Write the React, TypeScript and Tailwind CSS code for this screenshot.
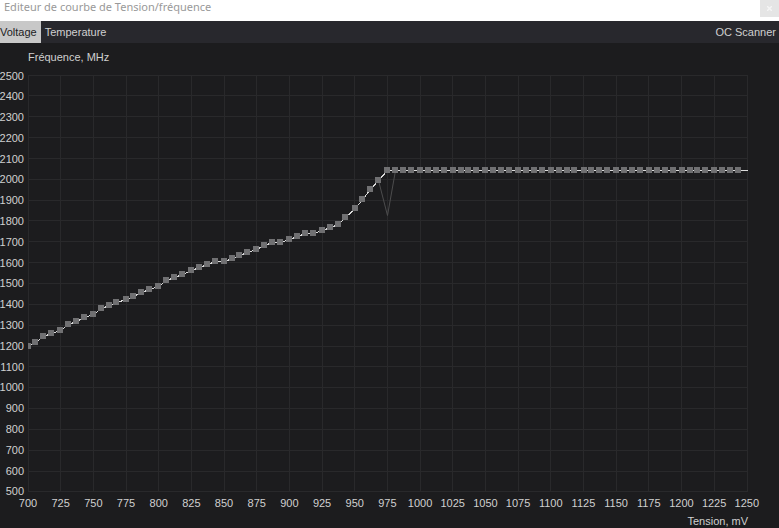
import { useState } from "react";

const TABS = ["Voltage", "Temperature"];

const FREQUENCIES = Array.from({ length: 21 }, (_, i) => 2500 - i * 100);
const VOLTAGES = Array.from({ length: 23 }, (_, i) => 700 + i * 25);

// plot area is 720 x 417, origin at 700 mV / 2500 MHz
const PLOT_W = 720;
const PLOT_H = 417;
const GRID_ROWS = [0, 20, 41, 62, 83, 104, 125, 145, 166, 187, 208, 229, 250, 271, 291, 312, 333, 354, 375, 396, 416];
const GRID_COLS = VOLTAGES.map((_, i) => Math.floor((i * 719) / 22));

// one point every 6.25 mV, heights in plot units
const RAMP = [
  271, 267, 261, 258, 255, 249, 246, 242, 239, 233, 230, 227, 224, 221, 217,
  214, 211, 205, 202, 199, 195, 192, 189, 186, 186, 183, 180, 177, 174, 170,
  167, 167, 164, 161, 158, 158, 155, 152, 149, 142, 133, 124, 114, 105,
];
const FLAT = 95;

const POINTS = Array.from({ length: 88 }, (_, i) => ({
  x: Math.floor(Math.floor(i * 6.25) * 1.3085),
  y: RAMP[i] ?? FLAT,
}));

const LINE = [...POINTS.map((p) => `${p.x},${p.y}`), `719,${FLAT}`].join(" ");

function TitleBar() {
  return (
    <header className="flex h-[21px] items-start justify-between bg-white">
      <h1 className="pl-1 font-['Noto_Sans'] text-[11px] leading-[14px] text-[#999999]">
        Editeur de courbe de Tension/fréquence
      </h1>
      <button aria-label="Fermer" className="flex h-[17px] w-[19px] items-center justify-center bg-[#e5e5e5]">
        <svg width="5" height="5" viewBox="0 0 5 5" stroke="#f5f5f5" strokeWidth="1.5">
          <path d="M0 0L5 5M5 0L0 5" />
        </svg>
      </button>
    </header>
  );
}

function Plot() {
  return (
    <svg
      className="block h-[417px] min-w-0 flex-1"
      viewBox={`0 0 ${PLOT_W} ${PLOT_H}`}
      preserveAspectRatio="none"
      shapeRendering="crispEdges"
    >
      <g fill="#29292b">
        {GRID_ROWS.map((y) => (
          <rect key={y} x={0} y={y} width={PLOT_W} height={1} />
        ))}
        {GRID_COLS.map((x) => (
          <rect key={x} x={x} y={0} width={1} height={PLOT_H} />
        ))}
      </g>
      {/* default curve */}
      <polyline
        points="350,105 359,140 367,95"
        transform="translate(0.5 0.5)"
        fill="none"
        stroke="#4c4c4d"
        shapeRendering="auto"
      />
      {/* current curve */}
      <polyline points={LINE} transform="translate(0.5 0.5)" fill="none" stroke="#dcdcdc" />
      <g fill="#707072">
        {POINTS.map((p) => (
          <rect key={p.x} x={p.x - 3} y={p.y - 3} width={6} height={6} />
        ))}
      </g>
    </svg>
  );
}

export default function App() {
  const [tab, setTab] = useState("Voltage");

  return (
    <div className="flex min-h-screen flex-col bg-[#1c1c1e] font-['Liberation_Sans',sans-serif] text-[11px] text-[#d0d0d0]">
      <TitleBar />

      <nav className="flex h-[22px] bg-[#28282d]">
        {TABS.map((t) => (
          <button
            key={t}
            onClick={() => setTab(t)}
            className={t === tab ? "bg-[#c8c8c8] pr-1 text-[#1c1c1e]" : "px-1"}
          >
            {t}
          </button>
        ))}
        <button className="ml-auto pr-[3px]">OC Scanner</button>
      </nav>

      <main className="flex-1">
        <p className="pt-2 pl-7 leading-[12px]">Fréquence, MHz</p>

        <div className="mt-3 flex pr-[31px]">
          <div className="flex w-7 flex-col justify-between pr-1">
            {FREQUENCIES.map((f) => (
              <span key={f} className="flex h-px items-center justify-end leading-[14px]">
                {f}
              </span>
            ))}
          </div>
          <Plot />
        </div>

        <div className="mt-[5px] flex justify-between pr-8 pl-7 leading-[12px]">
          {VOLTAGES.map((v) => (
            <span key={v} className="flex w-0 justify-center">
              {v}
            </span>
          ))}
        </div>
        <p className="mt-[6px] pr-[31px] text-right leading-[12px]">Tension, mV</p>
      </main>
    </div>
  );
}
